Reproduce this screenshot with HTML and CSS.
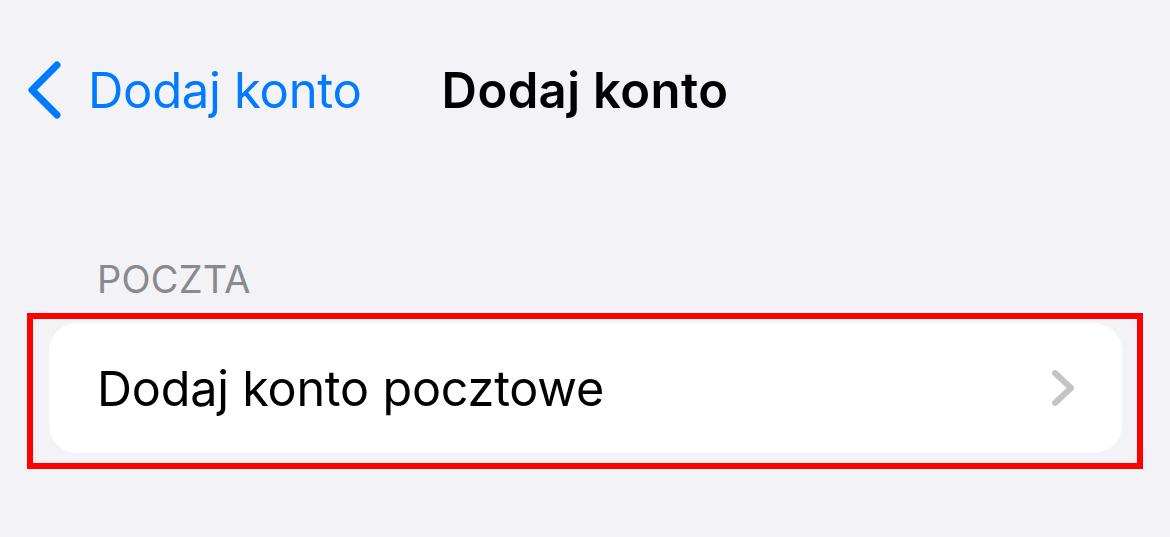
FILE: index.html
```html
<!DOCTYPE html>
<html lang="pl">
<head>
    <meta charset="UTF-8">
    <meta name="viewport" content="width=device-width, initial-scale=1.0">
    <title>Dodaj konto</title>
    <link rel="stylesheet" href="styles.css">
</head>
<body>
    <div class="nav">
        <a class="back" href="#">
            <svg class="back-icon" width="36" height="58" viewBox="0 0 36 58">
                <path d="M31 4 L6 29 L31 54" fill="none" stroke="#007aff" stroke-width="7" stroke-linecap="round" stroke-linejoin="round"/>
            </svg>
            <span>Dodaj konto</span>
        </a>
        <h1 class="title">Dodaj konto</h1>
        <div></div>
    </div>

    <div class="section">
        <div class="section-header">POCZTA</div>
        <div class="highlight">
            <div class="card">
                <div class="row">
                    <span>Dodaj konto pocztowe</span>
                    <svg class="chevron" width="22" height="36" viewBox="0 0 22 36">
                        <path d="M3 3 L19 18 L3 33" fill="none" stroke="#c4c4c7" stroke-width="6" stroke-linecap="round" stroke-linejoin="round"/>
                    </svg>
                </div>
            </div>
        </div>
    </div>
</body>
</html>
```

FILE: styles.css
```css
body {
    margin: 0;
    background-color: #f2f2f7;
    font-family: Inter, "Noto Sans", sans-serif;
    color: #000;
}
.nav {
    display: grid;
    grid-template-columns: 1fr auto 1fr;
    align-items: center;
    height: 180px;
}
.back {
    display: flex;
    align-items: center;
    gap: 26px;
    padding-left: 26px;
    color: #007aff;
    text-decoration: none;
    font-size: 49px;
    letter-spacing: -0.3px;
}
.title {
    margin: 0;
    font-size: 49px;
    font-weight: 600;
    letter-spacing: 0.4px;
}
.section {
    padding-top: 77px;
}
.section-header {
    padding-left: 97px;
    font-size: 38px;
    color: #8a8a8e;
    letter-spacing: 0.2px;
    line-height: 44px;
}
.highlight {
    margin: 12px 0 0 27px;
    width: 1073px;
    border: 6px solid #ff0000;
    padding: 4px 15px 10px 16px;
}
.card {
    background: #fff;
    border-radius: 28px;
}
.row {
    display: flex;
    align-items: center;
    justify-content: space-between;
    height: 130px;
    padding: 0 48px 0 48px;
    font-size: 48.5px;
    letter-spacing: -0.2px;
}
.chevron {
    display: block;
}
```
